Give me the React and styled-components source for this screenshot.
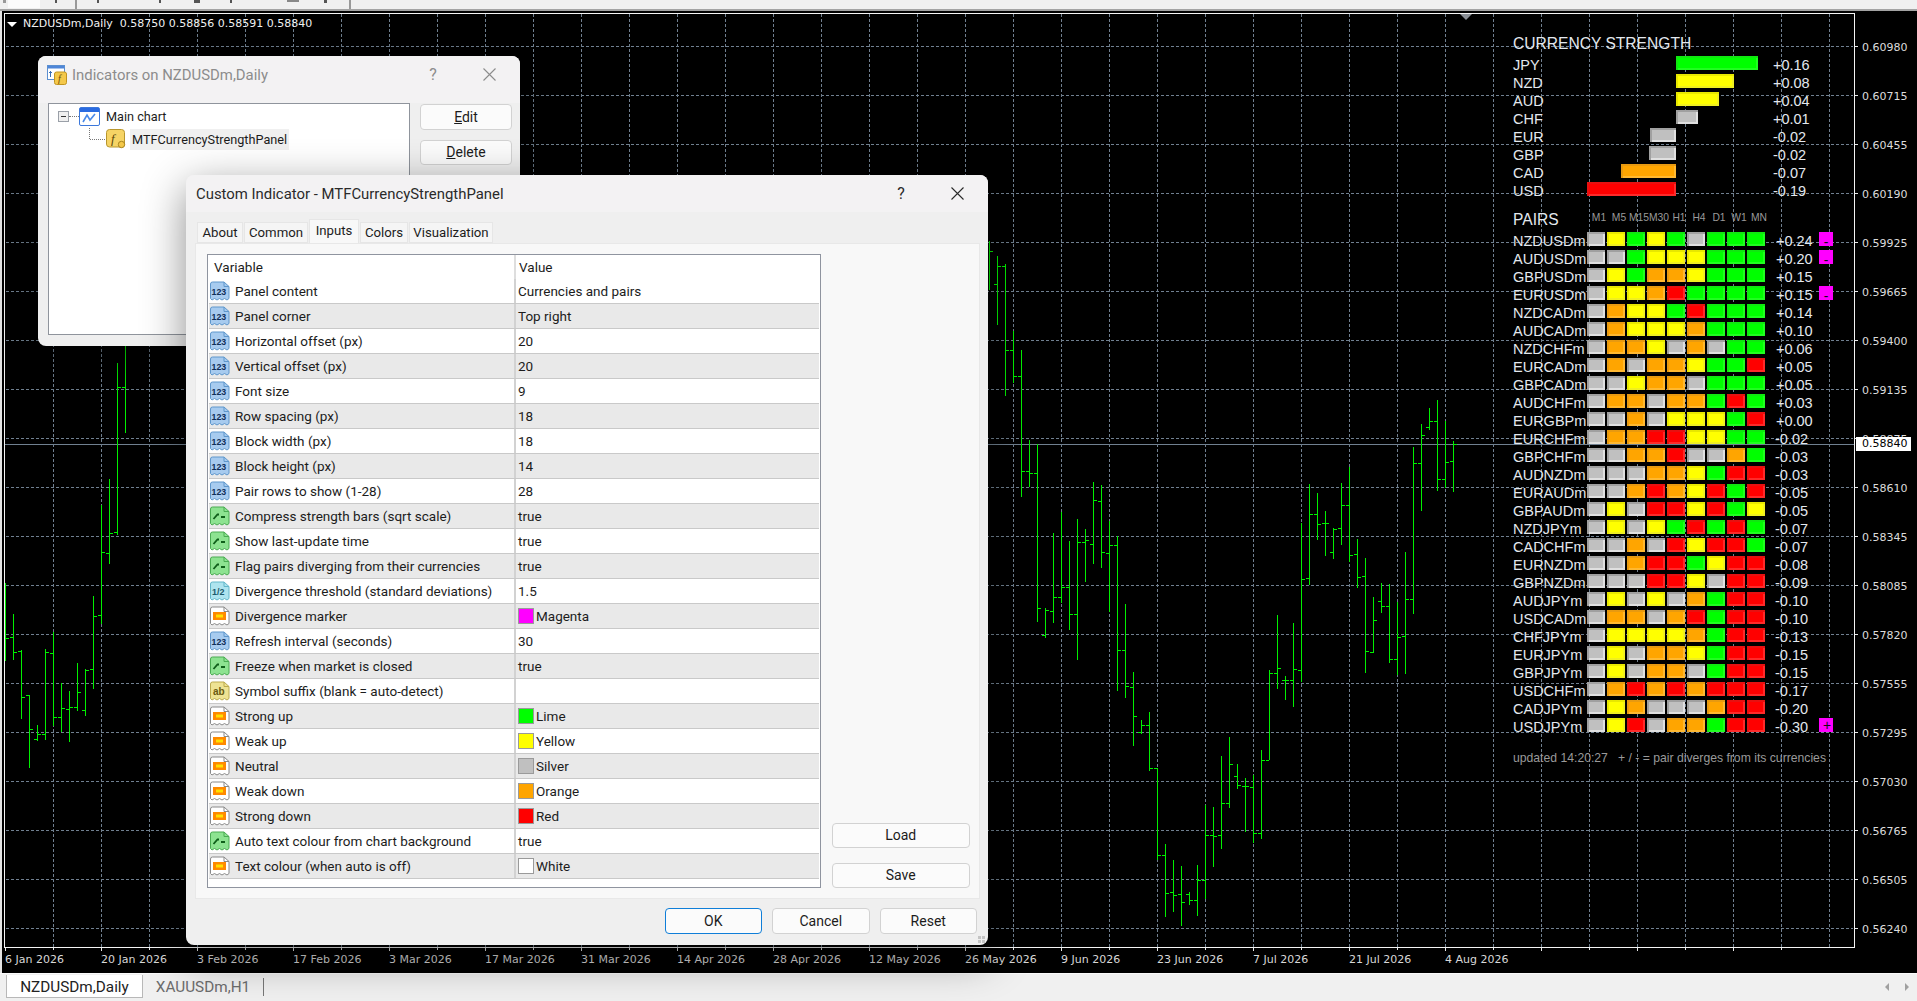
import React from 'react';
import styled, { createGlobalStyle } from 'styled-components';

const UI_FONT = 'Roboto, "Noto Sans", sans-serif';
const CHART_FONT = '"DejaVu Sans", sans-serif';
const PANEL_FONT = '"Liberation Sans", sans-serif';

const GlobalStyle = createGlobalStyle`
  html, body { margin: 0; padding: 0; background: #000; overflow: hidden; }
  * { box-sizing: border-box; }
`;

const Page = styled.div`
  width: 1917px;
  height: 1001px;
  display: flex;
  flex-direction: column;
  position: relative;
  overflow: hidden;
  font-family: ${UI_FONT};
`;

/* toolbar, only its lower edge is in the picture */
const TopStrip = styled.div`
  height: 11px;
  flex: none;
  display: flex;
  align-items: flex-start;
  background: #f0f0f0;
  border-bottom: 2px solid #a3a3a3;
`;
const ToolMark = styled.i`
  display: block;
  margin-left: ${(p) => p.$gap}px;
  width: ${(p) => p.$w || 2}px;
  height: ${(p) => p.$h || 3}px;
  background: ${(p) => p.$c || '#555'};
`;

const Middle = styled.div`
  flex: 1;
  min-height: 0;
  display: flex;
  flex-direction: column;
  background: #000;
  border-left: 2px solid #e4e4e4;
  padding-top: 2px;
`;
const ChartRow = styled.div`
  height: 935px;
  flex: none;
  display: flex;
`;
const ChartFrame = styled.div`
  width: 1851px;
  margin-left: 2px;
  flex: none;
  position: relative;
  border: 1px solid #f4f4f4;
`;
const ChartSvg = styled.svg`
  display: block;
  width: 1849px;
  height: 933px;
`;
const ChartLegend = styled.div`
  position: absolute;
  left: 2px;
  top: 3px;
  display: flex;
  align-items: center;
  gap: 6px;
  color: #f2f2f2;
  font: 11px/14px ${CHART_FONT};
  white-space: pre;
`;
const LegendArrow = styled.i`
  width: 0;
  height: 0;
  border-left: 5px solid transparent;
  border-right: 5px solid transparent;
  border-top: 5px solid #fff;
`;
const ShiftMark = styled.i`
  position: absolute;
  left: 1455px;
  top: 0;
  width: 0;
  height: 0;
  border-left: 6px solid transparent;
  border-right: 6px solid transparent;
  border-top: 6px solid #8a8f96;
`;

const PriceAxis = styled.div`
  flex: 1;
  position: relative;
  padding-top: 10px;
`;
const PriceLabel = styled.div`
  height: 49px;
  display: flex;
  align-items: center;
  padding-left: 7px;
  position: relative;
  color: #dcdcdc;
  font: 11px/14px ${CHART_FONT};
  &::before {
    content: '';
    position: absolute;
    left: 0;
    top: 23px;
    width: 3px;
    height: 1px;
    background: #e8e8e8;
  }
`;
const PriceTag = styled.div`
  position: absolute;
  left: 1px;
  top: 424px;
  width: 55px;
  height: 14px;
  padding-left: 6px;
  background: #fff;
  color: #000;
  font: 11px/14px ${CHART_FONT};
`;

const TimeAxis = styled.div`
  height: 25px;
  flex: none;
  display: flex;
  padding-left: 3px;
`;
const TimeLabel = styled.div`
  width: 96px;
  flex: none;
  position: relative;
  padding-top: 5px;
  color: #d8d8d8;
  font: 11px/14px ${CHART_FONT};
  white-space: nowrap;
  &::before,
  &::after {
    content: '';
    position: absolute;
    top: 0;
    width: 1px;
    background: #e8e8e8;
  }
  &::before { left: 0; height: 3px; }
  &::after { left: 48px; height: 2px; }
`;

const TabBar = styled.div`
  height: 28px;
  flex: none;
  display: flex;
  align-items: stretch;
  padding: 1px 0 3px 6px;
  background: #f0f0f0;
  border-top: 1px solid #fafafa;
  position: relative;
`;
const BottomTab = styled.div`
  width: ${(p) => p.$w}px;
  display: flex;
  align-items: center;
  justify-content: center;
  padding-top: 1px;
  background: ${(p) => (p.$active ? '#fff' : 'transparent')};
  border: ${(p) => (p.$active ? '1px solid #b8b8b8' : 'none')};
  border-top: none;
  color: ${(p) => (p.$active ? '#222' : '#6c6c6c')};
  font-size: 15.3px;
`;
const TabDivider = styled.i`
  width: 1px;
  margin: 3px 0 2px 0;
  background: #777;
`;
const TabScroll = styled.div`
  margin-left: auto;
  display: flex;
  gap: 16px;
  align-items: center;
  padding-right: 8px;
`;
const ScrollArrow = styled.i`
  width: 0;
  height: 0;
  border-top: 4px solid transparent;
  border-bottom: 4px solid transparent;
  border-left: ${(p) => (p.$right ? '4px solid #a0a0a0' : '0')};
  border-right: ${(p) => (p.$right ? '0' : '4px solid #a0a0a0')};
`;

/* currency strength panel drawn on the chart */
const Panel = styled.div`
  position: absolute;
  left: 1508px;
  top: 21px;
  width: 330px;
  color: #e3e8ee;
  font: 14.5px/18px ${PANEL_FONT};
`;
const PanelHeading = styled.div`
  height: 18px;
  font-size: 15.6px;
  white-space: nowrap;
`;
const StrengthList = styled.div`
  margin-top: 3px;
`;
const StrengthRow = styled.div`
  display: grid;
  grid-template-columns: 74px 89px 97px auto;
  height: 18px;
`;
const BarSide = styled.div`
  display: flex;
  justify-content: ${(p) => (p.$left ? 'flex-end' : 'flex-start')};
`;
const colours = {
  L: { bg: '#00ff00', tl: '#10e810', br: '#20ff20' },
  Y: { bg: '#ffff00', tl: '#e8e800', br: '#f0f020' },
  S: { bg: '#c0c0c0', tl: '#a0a0a0', br: '#e0e0e0' },
  O: { bg: '#ffa500', tl: '#e89a10', br: '#ffb830' },
  R: { bg: '#ff0000', tl: '#e81010', br: '#ff2a2a' },
};
const Fill = styled.div`
  height: 14px;
  width: ${(p) => p.$w || 18}px;
  flex: none;
  background: ${(p) => colours[p.$c].bg};
  box-shadow: inset 2px 2px 0 ${(p) => colours[p.$c].tl},
    inset -2px -2px 0 ${(p) => colours[p.$c].br};
`;
const PairsHead = styled.div`
  margin-top: 11px;
  display: grid;
  grid-template-columns: 74px repeat(9, 20px);
  height: 18px;
`;
const FrameCell = styled.div`
  display: flex;
  justify-content: center;
  padding-left: 4px;
  color: #9a9a9a;
  font-size: 10.3px;
  line-height: 13px;
  white-space: nowrap;
`;
const PairList = styled.div`
  margin-top: 3px;
`;
const PairRow = styled.div`
  display: grid;
  grid-template-columns: 74px repeat(9, 20px) 52px 14px;
  height: 18px;
`;
const PairName = styled.div`
  white-space: nowrap;
`;
const PairValue = styled.div`
  padding-left: ${(p) => (p.$neg ? 8 : 9)}px;
`;
const Marker = styled.div`
  width: 14px;
  height: 14px;
  background: #ff00ff;
  color: #111;
  display: flex;
  align-items: center;
  justify-content: center;
  font-size: 14px;
  line-height: 14px;
  padding-top: ${(p) => (p.$low ? 6 : 0)}px;
  padding-left: ${(p) => (p.$low ? 0 : 2)}px;
`;
const PanelFoot = styled.div`
  margin-top: 13px;
  color: #9a9a9a;
  font-size: 12.2px;
  white-space: pre;
`;

/* windows */
const Dialog = styled.div`
  position: absolute;
  left: ${(p) => p.$x}px;
  top: ${(p) => p.$y}px;
  width: ${(p) => p.$w}px;
  height: ${(p) => p.$h}px;
  background: #efefef;
  border-radius: 8px;
  color: #1c1c1c;
  font-size: 13.5px;
  box-shadow: 0 12px 44px rgba(0, 0, 0, 0.45);
  overflow: hidden;
  display: flex;
  flex-direction: column;
`;
const TitleBar = styled.div`
  height: ${(p) => p.$h}px;
  flex: none;
  display: flex;
  align-items: center;
  padding-left: ${(p) => p.$pad}px;
  padding-bottom: ${(p) => p.$lift || 0}px;
  background: #f3f2f3;
  color: ${(p) => (p.$dim ? '#8c8c8c' : '#2a2a2a')};
  font-size: 14.9px;
`;
const TitleText = styled.div`
  margin-left: ${(p) => p.$gap || 0}px;
  white-space: nowrap;
`;
const TitleHelp = styled.div`
  margin-left: auto;
  font-size: 16px;
  width: 20px;
  text-align: center;
`;
const TitleClose = styled.div`
  margin-left: ${(p) => p.$gap}px;
  margin-right: ${(p) => p.$right}px;
  display: flex;
`;

const IndicatorBody = styled.div`
  flex: 1;
  min-height: 0;
  display: flex;
  gap: 10px;
  padding: 0 8px 11px 10px;
`;
const TreeBox = styled.div`
  width: 362px;
  flex: none;
  background: #fff;
  border: 1px solid #8f949c;
`;
const TreeRow = styled.div`
  height: ${(p) => p.$h}px;
  display: flex;
  align-items: center;
  padding-left: ${(p) => p.$pad}px;
  white-space: nowrap;
`;
const Expander = styled.i`
  width: 11px;
  height: 11px;
  border: 1px solid #9aa0a8;
  background: #f0f0f0;
  position: relative;
  flex: none;
  &::after {
    content: '';
    position: absolute;
    left: 2px;
    top: 4px;
    width: 5px;
    height: 1px;
    background: #333;
  }
`;
const TreeDots = styled.i`
  width: 10px;
  border-top: 1px dotted #777;
  flex: none;
`;
const TreeLabel = styled.span`
  margin-left: ${(p) => p.$gap}px;
  padding: ${(p) => (p.$selected ? '3px 2px' : '0')};
  background: ${(p) => (p.$selected ? '#f0f0f0' : 'transparent')};
  font-size: 12.7px;
`;
const SideButtons = styled.div`
  flex: 1;
  display: flex;
  flex-direction: column;
  gap: 10px;
  padding-top: 1px;
`;
const Button = styled.div`
  width: ${(p) => p.$w}px;
  height: 25.5px;
  flex: none;
  display: flex;
  align-items: center;
  justify-content: center;
  background: #fbfbfb;
  border: 1px solid ${(p) => (p.$primary ? '#0f7ed8' : '#d2d2d2')};
  border-radius: 4px;
  color: #1c1c1c;
  font-size: 14px;
  u { text-decoration: underline; }
`;

const TabStrip = styled.div`
  height: 23px;
  margin-top: 8px;
  padding-left: 11px;
  display: flex;
  align-items: flex-end;
  gap: 1px;
  flex: none;
  position: relative;
  z-index: 1;
`;
const DialogTab = styled.div`
  width: ${(p) => p.$w}px;
  height: ${(p) => (p.$active ? 24 : 21)}px;
  display: flex;
  align-items: center;
  justify-content: center;
  background: ${(p) => (p.$active ? '#f8f8f8' : '#f5f5f5')};
  border: 1px solid #e6e6e6;
  border-bottom: ${(p) => (p.$active ? 'none' : '1px solid #e6e6e6')};
  font-size: 13.2px;
  padding-bottom: ${(p) => (p.$active ? 3 : 0)}px;
`;
const TabPane = styled.div`
  height: 656px;
  flex: none;
  margin: 0 8px 0 9px;
  display: flex;
  gap: 11px;
  padding: 10px 10px 10px 11px;
  background: #f8f8f8;
  border: 1px solid #e8e8e8;
`;
const Table = styled.div`
  width: 614px;
  flex: none;
  background: #fff;
  border: 1px solid #8f949f;
`;
const TableHead = styled.div`
  height: 24px;
  display: grid;
  grid-template-columns: 305px 1fr;
  align-items: center;
  margin: 0 1px;
`;
const HeadCell = styled.div`
  height: 100%;
  display: flex;
  align-items: center;
  padding-left: ${(p) => p.$pad}px;
  border-left: ${(p) => (p.$sep ? '2px solid #dedede' : 'none')};
`;
const Row = styled.div`
  height: 25px;
  margin: 0 1px;
  display: grid;
  grid-template-columns: 305px 1fr;
  background: ${(p) => (p.$odd ? '#e9e9e9' : '#fff')};
  border-bottom: 1px solid #c9c9c9;
`;
const VarCell = styled.div`
  display: flex;
  align-items: center;
  gap: 5px;
  white-space: nowrap;
`;
const ValueCell = styled.div`
  display: flex;
  align-items: center;
  gap: 2px;
  padding-left: 2px;
  border-left: 2px solid #d2d2d2;
  white-space: nowrap;
`;
const Swatch = styled.i`
  width: 16px;
  height: 16px;
  flex: none;
  background: ${(p) => p.$c};
  border: 1px solid #9a9a9a;
`;
const PaneSide = styled.div`
  flex: 1;
  display: flex;
  flex-direction: column;
  justify-content: flex-end;
  gap: 14.5px;
`;
const DialogFooter = styled.div`
  flex: 1;
  display: flex;
  justify-content: flex-end;
  gap: 10px;
  padding: 9px 11px 0 0;
`;
const SizeGrip = styled.svg`
  position: absolute;
  right: 3px;
  bottom: 2px;
`;

/* small drawn icons */
const docPath =
  'M1.5 3 Q1.5 1 3.5 1 H15 L20 5.5 V17.5 L18 19 L15.5 17.5 L13 19 L10.5 17.5 L8 19 L5.5 17.5 L3 19 L1.5 17.5 Z';
const iconStyles = {
  int: { fill: '#a7cbef', stroke: '#5f97cc' },
  bool: { fill: '#8de391', stroke: '#4aab52' },
  dbl: { fill: '#aee4ef', stroke: '#62b7ca' },
  str: { fill: '#eee393', stroke: '#bcab4e' },
  col: { fill: '#ffffff', stroke: '#8a8a8a' },
};

function TypeIcon({ kind }) {
  const st = iconStyles[kind];
  return (
    <svg width="21" height="20" viewBox="0 0 21 20" style={{ flex: 'none' }}>
      <path d={docPath} fill={st.fill} stroke={st.stroke} />
      <path d="M15 1 V5.5 H20" fill="none" stroke={st.stroke} />
      {kind === 'int' && (
        <text x="2.5" y="13.5" fontSize="8.8" fontWeight="700" fontFamily="Liberation Sans" fill="#0f2f58">
          123
        </text>
      )}
      {kind === 'bool' && (
        <path d="M4.5 13 L8.5 8.5 H10 M12 11 H16" fill="none" stroke="#0f5f1a" strokeWidth="1.8" />
      )}
      {kind === 'dbl' && (
        <text x="3" y="13.5" fontSize="9" fontWeight="700" fontFamily="Liberation Sans" fill="#1d5a6a">
          1/2
        </text>
      )}
      {kind === 'str' && (
        <text x="4" y="13.5" fontSize="10" fontWeight="700" fontFamily="Liberation Sans" fill="#6a5a10">
          ab
        </text>
      )}
      {kind === 'col' && (
        <>
          <rect x="4" y="6" width="13" height="8" fill="#ff8a00" />
          <rect x="7" y="8.5" width="7" height="3" fill="#ffe000" />
        </>
      )}
    </svg>
  );
}

function CloseGlyph({ colour }) {
  return (
    <svg width="13" height="13" viewBox="0 0 13 13">
      <path d="M0.5 0.5 L12.5 12.5 M12.5 0.5 L0.5 12.5" stroke={colour} strokeWidth="1.1" />
    </svg>
  );
}

function ChartWindowIcon() {
  return (
    <svg width="21" height="19" viewBox="0 0 21 19" style={{ flex: 'none' }}>
      <rect x="0.5" y="0.5" width="20" height="18" rx="1.5" fill="#fff" stroke="#3c78dc" />
      <rect x="1" y="1" width="19" height="4" fill="#2a6be0" />
      <path d="M4 15 L8 8 L11 13 L16 7" fill="none" stroke="#4a8ae8" strokeWidth="1.6" />
    </svg>
  );
}

function FunctionIcon({ size = 20 }) {
  return (
    <svg width={size} height={size} viewBox="0 0 20 20" style={{ flex: 'none' }}>
      <rect x="0.5" y="0.5" width="18" height="17.5" rx="3" fill="#f6d465" stroke="#b8962e" />
      <text x="5" y="14" fontSize="13" fontStyle="italic" fontFamily="Liberation Serif" fill="#5a4408">
        f
      </text>
      <circle cx="15.5" cy="15.5" r="3.2" fill="#f4c84a" stroke="#a8841e" />
    </svg>
  );
}

function TitleIcon() {
  return (
    <svg width="20" height="20" viewBox="0 0 20 20" style={{ flex: 'none' }}>
      <rect x="0.5" y="0.5" width="17" height="14" fill="#fff" stroke="#5b8fd0" />
      <rect x="1" y="1" width="16" height="2.5" fill="#4f86d8" />
      <path d="M3.5 6 V12 M2 7.5 H5" stroke="#3a70b8" fill="none" />
      <rect x="7.5" y="7" width="12" height="12.5" rx="2" fill="#f4c84a" stroke="#c09420" />
      <text x="11" y="17" fontSize="10" fontStyle="italic" fontFamily="Liberation Serif" fill="#6a4c08">
        f
      </text>
    </svg>
  );
}

/* chart data, in page pixels: x, high, low, open, close */
const bars = [
  [5, 583, 661, 0, 638], [13, 614, 660, 637, 652], [21, 650, 719, 651, 697], [29, 695, 768, 695, 729],
  [37, 725, 741, 739, 734], [45, 649, 740, 734, 652], [53, 632, 726, 653, 717], [61, 683, 732, 717, 708],
  [69, 691, 742, 709, 707], [77, 663, 711, 707, 692], [85, 669, 716, 710, 670], [93, 596, 689, 669, 616],
  [101, 505, 624, 615, 552], [109, 479, 564, 553, 533], [117, 363, 535, 532, 387], [125, 330, 433, 387, 0],
  [989, 241, 290, 0, 251], [997, 256, 325, 284, 266], [1005, 264, 396, 266, 350], [1013, 331, 383, 350, 376],
  [1021, 350, 497, 376, 471], [1029, 440, 487, 471, 473], [1037, 444, 622, 473, 608], [1045, 608, 638, 635, 610],
  [1053, 533, 623, 611, 597], [1061, 512, 603, 597, 587], [1069, 541, 630, 587, 614], [1077, 519, 660, 614, 542],
  [1085, 529, 582, 542, 540], [1093, 482, 564, 544, 500], [1101, 485, 568, 501, 552], [1109, 521, 612, 553, 545],
  [1117, 536, 691, 545, 650], [1125, 604, 698, 650, 686], [1133, 672, 746, 687, 716], [1141, 720, 734, 732, 725],
  [1149, 712, 771, 725, 768], [1157, 768, 860, 768, 855], [1165, 844, 917, 855, 893], [1173, 860, 912, 892, 895],
  [1181, 866, 926, 894, 902], [1189, 892, 905, 894, 900], [1197, 865, 916, 900, 880], [1205, 805, 899, 880, 835],
  [1213, 807, 867, 835, 836], [1221, 756, 849, 835, 803], [1229, 737, 808, 803, 764], [1237, 764, 789, 776, 785],
  [1245, 778, 832, 786, 786], [1253, 775, 843, 787, 833], [1261, 750, 839, 833, 760], [1269, 670, 760, 760, 673],
  [1277, 615, 689, 673, 668], [1285, 676, 700, 680, 680], [1293, 623, 707, 680, 669], [1301, 523, 682, 670, 579],
  [1309, 484, 585, 578, 514], [1317, 493, 540, 514, 524], [1325, 511, 556, 523, 523], [1333, 528, 559, 552, 529],
  [1341, 483, 545, 528, 505], [1349, 467, 562, 505, 555], [1357, 539, 588, 554, 577], [1365, 558, 673, 576, 651],
  [1373, 597, 653, 652, 620], [1381, 583, 613, 601, 606], [1389, 584, 663, 606, 659], [1397, 602, 675, 659, 637],
  [1405, 552, 674, 636, 599], [1413, 447, 614, 599, 463], [1421, 424, 511, 463, 435], [1429, 408, 430, 427, 421],
  [1437, 400, 491, 421, 479], [1445, 421, 488, 479, 462], [1453, 441, 492, 461, 444],
];

const prices = [
  '0.60980', '0.60715', '0.60455', '0.60190', '0.59925', '0.59665', '0.59400', '0.59135', '0.58875', '0.58610',
  '0.58345', '0.58085', '0.57820', '0.57555', '0.57295', '0.57030', '0.56765', '0.56505', '0.56240',
];
const dates = [
  '6 Jan 2026', '20 Jan 2026', '3 Feb 2026', '17 Feb 2026', '3 Mar 2026', '17 Mar 2026', '31 Mar 2026', '14 Apr 2026',
  '28 Apr 2026', '12 May 2026', '26 May 2026', '9 Jun 2026', '23 Jun 2026', '7 Jul 2026', '21 Jul 2026', '4 Aug 2026',
  '', '', '',
];

const strengths = [
  ['JPY', '+0.16', 'L', 82, false], ['NZD', '+0.08', 'Y', 58, false], ['AUD', '+0.04', 'Y', 43, false],
  ['CHF', '+0.01', 'S', 22, false], ['EUR', '-0.02', 'S', 26, true], ['GBP', '-0.02', 'S', 27, true],
  ['CAD', '-0.07', 'O', 55, true], ['USD', '-0.19', 'R', 89, true],
];
const frames = ['M1', 'M5', 'M15', 'M30', 'H1', 'H4', 'D1', 'W1', 'MN'];
const pairs = [
  ['NZDUSDm', 'SYLYLSLLL', '+0.24', '-'], ['AUDUSDm', 'SSLYYYLLL', '+0.20', '-'], ['GBPUSDm', 'SYLOOYLLL', '+0.15'],
  ['EURUSDm', 'SYYORLLLL', '+0.15', '-'], ['NZDCADm', 'SOYYLRLLL', '+0.14'], ['AUDCADm', 'SOYYYOLLL', '+0.10'],
  ['NZDCHFm', 'SOOYSOSLL', '+0.06'], ['EURCADm', 'SOSOOYLLR', '+0.05'], ['GBPCADm', 'SSYOOSLLL', '+0.05'],
  ['AUDCHFm', 'SOOSOOLRL', '+0.03'], ['EURGBPm', 'SSOSYYYLR', '+0.00'], ['EURCHFm', 'SOORRYYLL', '-0.02'],
  ['GBPCHFm', 'SSOORSSOL', '-0.03'], ['AUDNZDm', 'SSSOOYLRR', '-0.03'], ['EURAUDm', 'SSOROYRLR', '-0.05'],
  ['GBPAUDm', 'SYSRRYRLY', '-0.05'], ['NZDJPYm', 'SYSYLRLRL', '-0.07'], ['CADCHFm', 'SSOSRYRRL', '-0.07'],
  ['EURNZDm', 'SSORRLYRR', '-0.08'], ['GBPNZDm', 'SSSRRYSRR', '-0.09'], ['AUDJPYm', 'SYSYSOLRR', '-0.10'],
  ['USDCADm', 'SOOSORLRR', '-0.10'], ['CHFJPYm', 'SYYYYOLRR', '-0.13'], ['EURJPYm', 'SYSOOYLRR', '-0.15'],
  ['GBPJPYm', 'SYSOOSLRR', '-0.15'], ['USDCHFm', 'SORORORRR', '-0.17'], ['CADJPYm', 'SYOSSSORR', '-0.20'],
  ['USDJPYm', 'SYRSOOLRR', '-0.30', '+'],
];

const inputs = [
  ['int', 'Panel content', 'Currencies and pairs'], ['int', 'Panel corner', 'Top right'],
  ['int', 'Horizontal offset (px)', '20'], ['int', 'Vertical offset (px)', '20'], ['int', 'Font size', '9'],
  ['int', 'Row spacing (px)', '18'], ['int', 'Block width (px)', '18'], ['int', 'Block height (px)', '14'],
  ['int', 'Pair rows to show (1-28)', '28'], ['bool', 'Compress strength bars (sqrt scale)', 'true'],
  ['bool', 'Show last-update time', 'true'], ['bool', 'Flag pairs diverging from their currencies', 'true'],
  ['dbl', 'Divergence threshold (standard deviations)', '1.5'], ['col', 'Divergence marker', 'Magenta', '#ff00ff'],
  ['int', 'Refresh interval (seconds)', '30'], ['bool', 'Freeze when market is closed', 'true'],
  ['str', 'Symbol suffix (blank = auto-detect)', ''], ['col', 'Strong up', 'Lime', '#00ff00'],
  ['col', 'Weak up', 'Yellow', '#ffff00'], ['col', 'Neutral', 'Silver', '#c0c0c0'],
  ['col', 'Weak down', 'Orange', '#ffa500'], ['col', 'Strong down', 'Red', '#ff0000'],
  ['bool', 'Auto text colour from chart background', 'true'], ['col', 'Text colour (when auto is off)', 'White', '#ffffff'],
];

const hLines = Array.from({ length: 19 }, (_, i) => 46.5 + i * 49);
const vLines = Array.from({ length: 38 }, (_, i) => 53.5 + i * 48);

function Chart() {
  return (
    <ChartSvg viewBox="5 14 1849 933" shapeRendering="crispEdges">
      <g stroke="#708090" strokeDasharray="3 2" strokeWidth="1">
        {hLines.map((y) => (
          <line key={y} x1="6" x2="1853" y1={y} y2={y} />
        ))}
        {vLines.map((x) => (
          <line key={x} x1={x} x2={x} y1="14" y2="947" />
        ))}
      </g>
      <line x1="5" x2="1854" y1="444.5" y2="444.5" stroke="#708090" />
      <g stroke="#00f000" strokeWidth="1">
        {bars.map(([x, hi, lo, op, cl]) => (
          <g key={x}>
            <line x1={x + 0.5} x2={x + 0.5} y1={hi} y2={lo} />
            {op > 0 && <line x1={x - 3} x2={x} y1={op + 0.5} y2={op + 0.5} />}
            {cl > 0 && <line x1={x + 1} x2={x + 4} y1={cl + 0.5} y2={cl + 0.5} />}
          </g>
        ))}
      </g>
    </ChartSvg>
  );
}

function StrengthPanel() {
  return (
    <Panel>
      <PanelHeading>CURRENCY STRENGTH</PanelHeading>
      <StrengthList>
        {strengths.map(([name, value, colour, width, negative]) => (
          <StrengthRow key={name}>
            <div>{name}</div>
            <BarSide $left>{negative && <Fill $c={colour} style={{ width }} />}</BarSide>
            <BarSide>{!negative && <Fill $c={colour} style={{ width }} />}</BarSide>
            <div>{value}</div>
          </StrengthRow>
        ))}
      </StrengthList>
      <PairsHead>
        <PanelHeading>PAIRS</PanelHeading>
        {frames.map((f) => (
          <FrameCell key={f}>{f}</FrameCell>
        ))}
      </PairsHead>
      <PairList>
        {pairs.map(([name, blocks, value, mark]) => (
          <PairRow key={name}>
            <PairName>{name}</PairName>
            {blocks.split('').map((c, i) => (
              <Fill key={i} $c={c} />
            ))}
            <PairValue $neg={value[0] === '-'}>{value}</PairValue>
            {mark && <Marker $low={mark === '-'}>{mark}</Marker>}
          </PairRow>
        ))}
      </PairList>
      <PanelFoot>updated 14:20:27   + / - = pair diverges from its currencies</PanelFoot>
    </Panel>
  );
}

function IndicatorsDialog() {
  return (
    <Dialog $x={38} $y={56} $w={482} $h={290}>
      <TitleBar $h={47} $pad={9} $lift={10} $dim>
        <TitleIcon />
        <TitleText $gap={5}>Indicators on NZDUSDm,Daily</TitleText>
        <TitleHelp>?</TitleHelp>
        <TitleClose $gap={40} $right={24}>
          <CloseGlyph colour="#8c8c8c" />
        </TitleClose>
      </TitleBar>
      <IndicatorBody>
        <TreeBox>
          <TreeRow $h={24} $pad={9}>
            <Expander />
            <TreeDots />
            <ChartWindowIcon />
            <TreeLabel $gap={6}>Main chart</TreeLabel>
          </TreeRow>
          <TreeRow $h={22} $pad={40}>
            <svg width="17" height="22" viewBox="0 0 17 22" style={{ flex: 'none' }}>
              <path d="M0.5 0 V11.5 H17" fill="none" stroke="#777" strokeDasharray="1 1" />
            </svg>
            <FunctionIcon />
            <TreeLabel $gap={4} $selected>
              MTFCurrencyStrengthPanel
            </TreeLabel>
          </TreeRow>
        </TreeBox>
        <SideButtons>
          <Button $w={92}>
            <span>
              <u>E</u>dit
            </span>
          </Button>
          <Button $w={92}>
            <span>
              <u>D</u>elete
            </span>
          </Button>
        </SideButtons>
      </IndicatorBody>
    </Dialog>
  );
}

function CustomIndicatorDialog() {
  return (
    <Dialog $x={186} $y={175} $w={802} $h={770}>
      <TitleBar $h={37} $pad={10}>
        <TitleText>Custom Indicator - MTFCurrencyStrengthPanel</TitleText>
        <TitleHelp>?</TitleHelp>
        <TitleClose $gap={40} $right={24}>
          <CloseGlyph colour="#2a2a2a" />
        </TitleClose>
      </TitleBar>
      <TabStrip>
        <DialogTab $w={46}>About</DialogTab>
        <DialogTab $w={64}>Common</DialogTab>
        <DialogTab $w={50} $active>
          Inputs
        </DialogTab>
        <DialogTab $w={48}>Colors</DialogTab>
        <DialogTab $w={84}>Visualization</DialogTab>
      </TabStrip>
      <TabPane>
        <Table>
          <TableHead>
            <HeadCell $pad={5}>Variable</HeadCell>
            <HeadCell $pad={3} $sep>
              Value
            </HeadCell>
          </TableHead>
          {inputs.map(([kind, label, value, colour], i) => (
            <Row key={label} $odd={i % 2 === 1}>
              <VarCell>
                <TypeIcon kind={kind} />
                {label}
              </VarCell>
              <ValueCell>
                {colour && <Swatch $c={colour} />}
                {value}
              </ValueCell>
            </Row>
          ))}
        </Table>
        <PaneSide>
          <Button $w={137.5}>Load</Button>
          <Button $w={137.5}>Save</Button>
        </PaneSide>
      </TabPane>
      <DialogFooter>
        <Button $w={97.5} $primary>
          OK
        </Button>
        <Button $w={97.5}>Cancel</Button>
        <Button $w={97.5}>Reset</Button>
      </DialogFooter>
      <SizeGrip width="7" height="7" viewBox="0 0 7 7">
        <path d="M0 0h3v3h-3z M4 0h3v3h-3z M0 4h3v3h-3z M4 4h3v3h-3z" fill="#c4c4c4" />
      </SizeGrip>
    </Dialog>
  );
}

export default function App() {
  return (
    <Page>
      <GlobalStyle />
      <TopStrip>
        <ToolMark $gap={3} $w={3} $c="#999" />
        <ToolMark $gap={2} $w={32} $h={8} $c="#fbfbfb" />
        <ToolMark $gap={15} />
        <ToolMark $gap={18} $h={9} $c="#999" />
        <ToolMark $gap={20} />
        <ToolMark $gap={60} />
        <ToolMark $gap={33} $w={6} />
        <ToolMark $gap={30} />
        <ToolMark $gap={55} $w={12} $h={2} $c="#888" />
        <ToolMark $gap={25} $w={3} />
        <ToolMark $gap={22} $h={9} $c="#999" />
      </TopStrip>
      <Middle>
        <ChartRow>
          <ChartFrame>
            <Chart />
            <ChartLegend>
              <LegendArrow />
              NZDUSDm,Daily  0.58750 0.58856 0.58591 0.58840
            </ChartLegend>
            <ShiftMark />
            <StrengthPanel />
          </ChartFrame>
          <PriceAxis>
            {prices.map((p) => (
              <PriceLabel key={p}>{p}</PriceLabel>
            ))}
            <PriceTag>0.58840</PriceTag>
          </PriceAxis>
        </ChartRow>
        <TimeAxis>
          {dates.map((d, i) => (
            <TimeLabel key={i}>{d}</TimeLabel>
          ))}
        </TimeAxis>
      </Middle>
      <TabBar>
        <BottomTab $w={137} $active>
          NZDUSDm,Daily
        </BottomTab>
        <BottomTab $w={120}>XAUUSDm,H1</BottomTab>
        <TabDivider />
        <TabScroll>
          <ScrollArrow />
          <ScrollArrow $right />
        </TabScroll>
      </TabBar>
      <IndicatorsDialog />
      <CustomIndicatorDialog />
    </Page>
  );
}
